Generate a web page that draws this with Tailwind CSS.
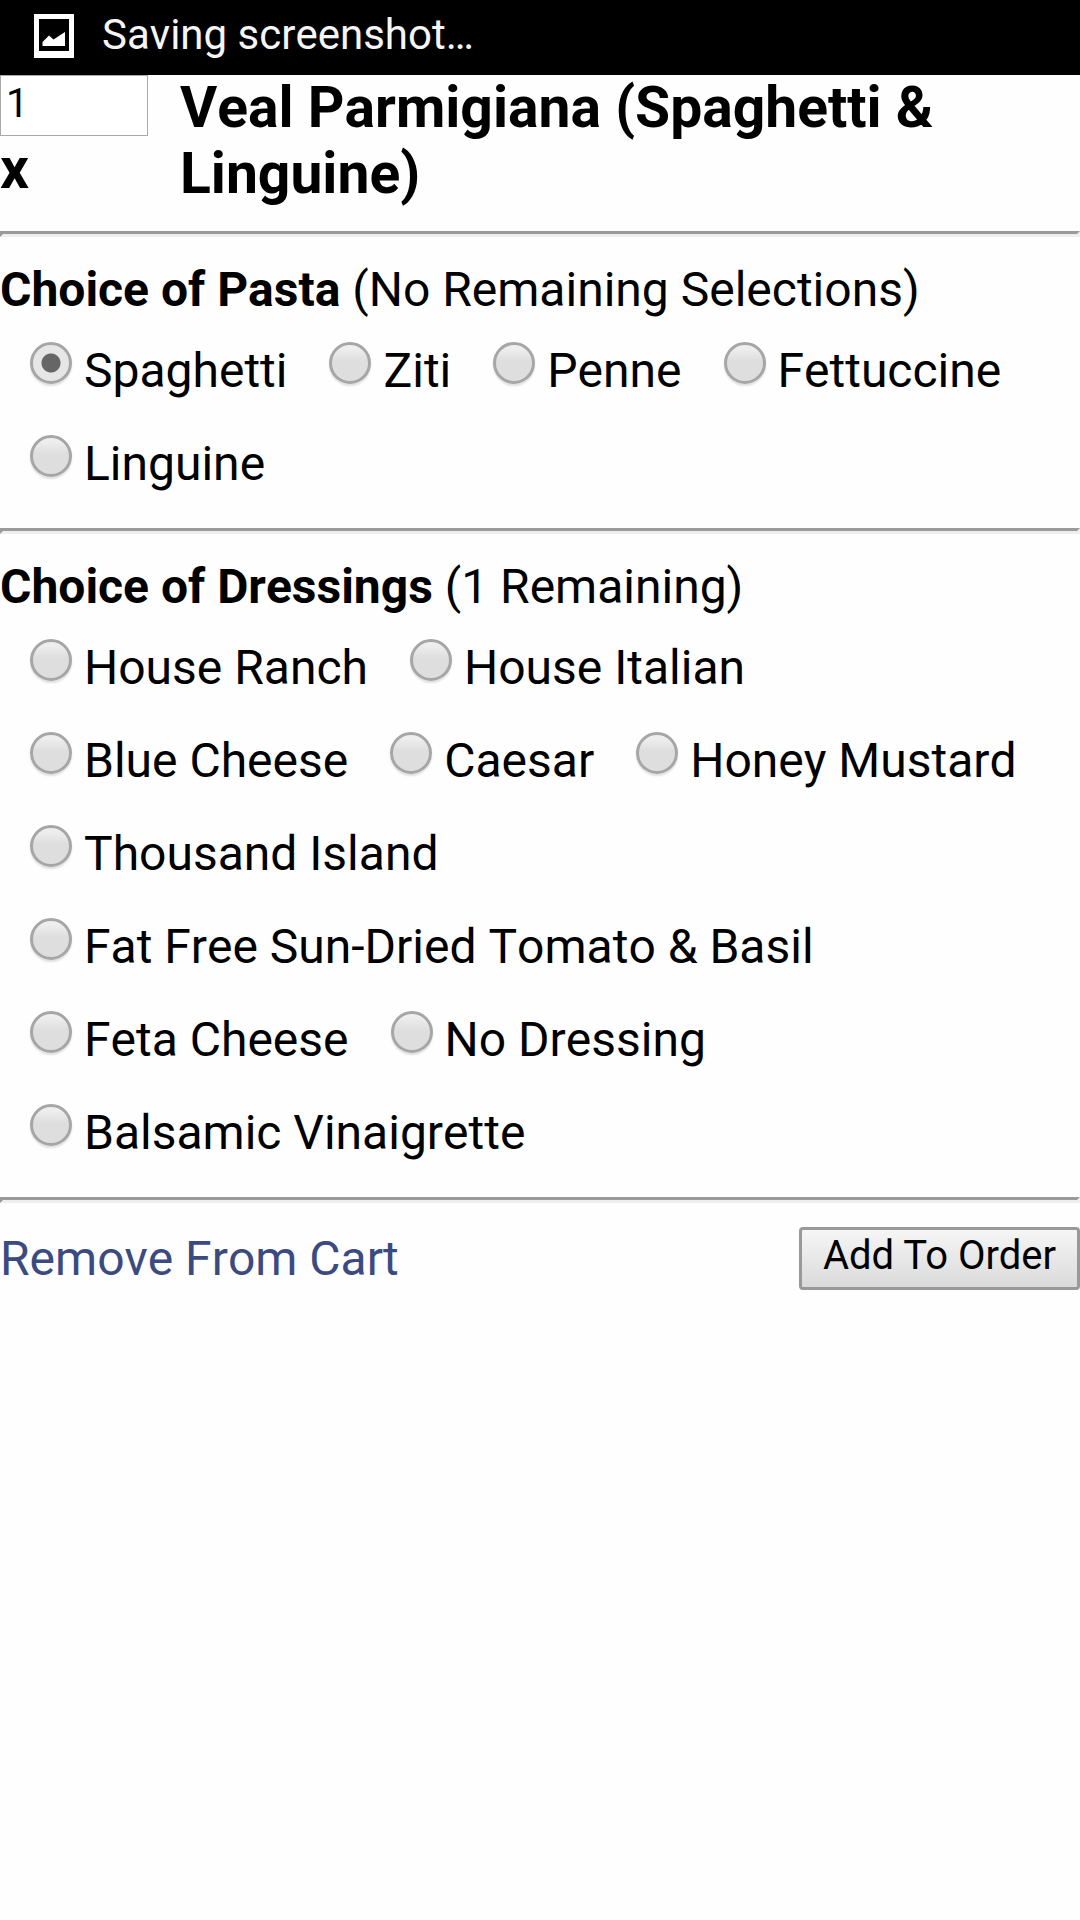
<!DOCTYPE html>
<html lang="en">
<head>
<meta charset="utf-8">
<meta name="viewport" content="width=device-width, initial-scale=1">
<title>Veal Parmigiana (Spaghetti &amp; Linguine)</title>
<script src="https://cdn.jsdelivr.net/npm/@tailwindcss/browser@4"></script>
</head>
<body class="min-h-screen bg-[#fefefe] font-[Roboto,sans-serif] text-[48px] text-black [font-kerning:none]">
<header class="flex h-[75px] items-center gap-7 bg-black pr-8 pb-[3px] pl-[34px] text-[42px] leading-[56px] text-[#f5f5f5]">
  <svg class="h-11 w-10 shrink-0" viewBox="0 0 40 44" aria-hidden="true">
    <rect width="40" height="44" fill="#fff"/>
    <rect x="5" y="5" width="30" height="32" fill="#000"/>
    <path d="M8.500 32v-4l6.500-6.500 4.500 4 11.500-7.500v14z" fill="#fff"/>
  </svg>
  <span class="pb-[2px]">Saving screenshot…</span>
</header>

<form>
  <div class="flex pb-6 text-[57px] leading-[66px] font-bold">
    <div class="w-1/6 shrink-0">
      <input id="qty" type="text" value="1" class="block h-[61px] w-[148px] border border-[#a9a9a9] bg-white px-[5px] pb-1 text-[40px] leading-[48px] font-normal">
      <label for="qty" class="block">x</label>
    </div>
    <h1>Veal Parmigiana (Spaghetti &amp; Linguine)</h1>
  </div>

  <hr class="border-3 border-t-[#9a9a9a] border-r-[#eee] border-b-[#eee] border-l-[#9a9a9a]">

  <fieldset class="pt-6 pb-[18px]">
    <legend class="contents"><span class="block leading-[57px]"><b>Choice of Pasta</b> (No Remaining Selections)</span></legend>
    <div class="flex flex-wrap gap-x-[42px] pt-[6px] pl-[30px] leading-[93px]">
      <label class="flex items-start gap-3"><input type="radio" name="pasta" checked class="mt-[18px] size-[42px] shrink-0 appearance-none rounded-full border-3 border-[#a6a6a6] bg-linear-to-b from-[#eee] from-10% to-[#dedede] to-45% shadow-[0_2px_2px_rgba(0,0,0,0.12)] checked:bg-radial checked:from-[#666] checked:from-[9px] checked:to-[#e6e6e6] checked:to-[10px]">Spaghetti</label>
      <label class="flex items-start gap-3"><input type="radio" name="pasta" class="mt-[18px] size-[42px] shrink-0 appearance-none rounded-full border-3 border-[#a6a6a6] bg-linear-to-b from-[#eee] from-10% to-[#dedede] to-45% shadow-[0_2px_2px_rgba(0,0,0,0.12)] checked:bg-radial checked:from-[#666] checked:from-[9px] checked:to-[#e6e6e6] checked:to-[10px]">Ziti</label>
      <label class="flex items-start gap-3"><input type="radio" name="pasta" class="mt-[18px] size-[42px] shrink-0 appearance-none rounded-full border-3 border-[#a6a6a6] bg-linear-to-b from-[#eee] from-10% to-[#dedede] to-45% shadow-[0_2px_2px_rgba(0,0,0,0.12)] checked:bg-radial checked:from-[#666] checked:from-[9px] checked:to-[#e6e6e6] checked:to-[10px]">Penne</label>
      <label class="flex items-start gap-3"><input type="radio" name="pasta" class="mt-[18px] size-[42px] shrink-0 appearance-none rounded-full border-3 border-[#a6a6a6] bg-linear-to-b from-[#eee] from-10% to-[#dedede] to-45% shadow-[0_2px_2px_rgba(0,0,0,0.12)] checked:bg-radial checked:from-[#666] checked:from-[9px] checked:to-[#e6e6e6] checked:to-[10px]">Fettuccine</label>
      <label class="flex items-start gap-3"><input type="radio" name="pasta" class="mt-[18px] size-[42px] shrink-0 appearance-none rounded-full border-3 border-[#a6a6a6] bg-linear-to-b from-[#eee] from-10% to-[#dedede] to-45% shadow-[0_2px_2px_rgba(0,0,0,0.12)] checked:bg-radial checked:from-[#666] checked:from-[9px] checked:to-[#e6e6e6] checked:to-[10px]">Linguine</label>
    </div>
  </fieldset>

  <hr class="border-3 border-t-[#9a9a9a] border-r-[#eee] border-b-[#eee] border-l-[#9a9a9a]">

  <fieldset class="pt-6 pb-[18px]">
    <legend class="contents"><span class="block leading-[57px]"><b>Choice of Dressings</b> (1 Remaining)</span></legend>
    <div class="flex flex-wrap gap-x-[42px] pt-[6px] pl-[30px] leading-[93px]">
      <label class="flex items-start gap-3"><input type="radio" name="dressing" class="mt-[18px] size-[42px] shrink-0 appearance-none rounded-full border-3 border-[#a6a6a6] bg-linear-to-b from-[#eee] from-10% to-[#dedede] to-45% shadow-[0_2px_2px_rgba(0,0,0,0.12)] checked:bg-radial checked:from-[#666] checked:from-[9px] checked:to-[#e6e6e6] checked:to-[10px]">House Ranch</label>
      <label class="flex items-start gap-3"><input type="radio" name="dressing" class="mt-[18px] size-[42px] shrink-0 appearance-none rounded-full border-3 border-[#a6a6a6] bg-linear-to-b from-[#eee] from-10% to-[#dedede] to-45% shadow-[0_2px_2px_rgba(0,0,0,0.12)] checked:bg-radial checked:from-[#666] checked:from-[9px] checked:to-[#e6e6e6] checked:to-[10px]">House Italian</label>
      <label class="flex items-start gap-3"><input type="radio" name="dressing" class="mt-[18px] size-[42px] shrink-0 appearance-none rounded-full border-3 border-[#a6a6a6] bg-linear-to-b from-[#eee] from-10% to-[#dedede] to-45% shadow-[0_2px_2px_rgba(0,0,0,0.12)] checked:bg-radial checked:from-[#666] checked:from-[9px] checked:to-[#e6e6e6] checked:to-[10px]">Blue Cheese</label>
      <label class="flex items-start gap-3"><input type="radio" name="dressing" class="mt-[18px] size-[42px] shrink-0 appearance-none rounded-full border-3 border-[#a6a6a6] bg-linear-to-b from-[#eee] from-10% to-[#dedede] to-45% shadow-[0_2px_2px_rgba(0,0,0,0.12)] checked:bg-radial checked:from-[#666] checked:from-[9px] checked:to-[#e6e6e6] checked:to-[10px]">Caesar</label>
      <label class="flex items-start gap-3"><input type="radio" name="dressing" class="mt-[18px] size-[42px] shrink-0 appearance-none rounded-full border-3 border-[#a6a6a6] bg-linear-to-b from-[#eee] from-10% to-[#dedede] to-45% shadow-[0_2px_2px_rgba(0,0,0,0.12)] checked:bg-radial checked:from-[#666] checked:from-[9px] checked:to-[#e6e6e6] checked:to-[10px]">Honey Mustard</label>
      <label class="flex items-start gap-3"><input type="radio" name="dressing" class="mt-[18px] size-[42px] shrink-0 appearance-none rounded-full border-3 border-[#a6a6a6] bg-linear-to-b from-[#eee] from-10% to-[#dedede] to-45% shadow-[0_2px_2px_rgba(0,0,0,0.12)] checked:bg-radial checked:from-[#666] checked:from-[9px] checked:to-[#e6e6e6] checked:to-[10px]">Thousand Island</label>
      <label class="flex items-start gap-3"><input type="radio" name="dressing" class="mt-[18px] size-[42px] shrink-0 appearance-none rounded-full border-3 border-[#a6a6a6] bg-linear-to-b from-[#eee] from-10% to-[#dedede] to-45% shadow-[0_2px_2px_rgba(0,0,0,0.12)] checked:bg-radial checked:from-[#666] checked:from-[9px] checked:to-[#e6e6e6] checked:to-[10px]">Fat Free Sun-Dried Tomato &amp; Basil</label>
      <label class="flex items-start gap-3"><input type="radio" name="dressing" class="mt-[18px] size-[42px] shrink-0 appearance-none rounded-full border-3 border-[#a6a6a6] bg-linear-to-b from-[#eee] from-10% to-[#dedede] to-45% shadow-[0_2px_2px_rgba(0,0,0,0.12)] checked:bg-radial checked:from-[#666] checked:from-[9px] checked:to-[#e6e6e6] checked:to-[10px]">Feta Cheese</label>
      <label class="flex items-start gap-3"><input type="radio" name="dressing" class="mt-[18px] size-[42px] shrink-0 appearance-none rounded-full border-3 border-[#a6a6a6] bg-linear-to-b from-[#eee] from-10% to-[#dedede] to-45% shadow-[0_2px_2px_rgba(0,0,0,0.12)] checked:bg-radial checked:from-[#666] checked:from-[9px] checked:to-[#e6e6e6] checked:to-[10px]">No Dressing</label>
      <label class="flex items-start gap-3"><input type="radio" name="dressing" class="mt-[18px] size-[42px] shrink-0 appearance-none rounded-full border-3 border-[#a6a6a6] bg-linear-to-b from-[#eee] from-10% to-[#dedede] to-45% shadow-[0_2px_2px_rgba(0,0,0,0.12)] checked:bg-radial checked:from-[#666] checked:from-[9px] checked:to-[#e6e6e6] checked:to-[10px]">Balsamic Vinaigrette</label>
    </div>
  </fieldset>

  <hr class="border-3 border-t-[#9a9a9a] border-r-[#eee] border-b-[#eee] border-l-[#9a9a9a]">

  <div class="flex items-center justify-between pt-6 leading-[63px]">
    <a href="#" class="text-[#3b4a80]">Remove From Cart</a>
    <button type="button" class="h-[63px] rounded-[4px] border-3 border-[#999] bg-linear-to-b from-[#f6f6f6] to-[#dadada] px-[21px] pb-[6px] text-[40px] leading-[51px] [font-kerning:auto]">Add To Order</button>
  </div>
</form>
</body>
</html>
